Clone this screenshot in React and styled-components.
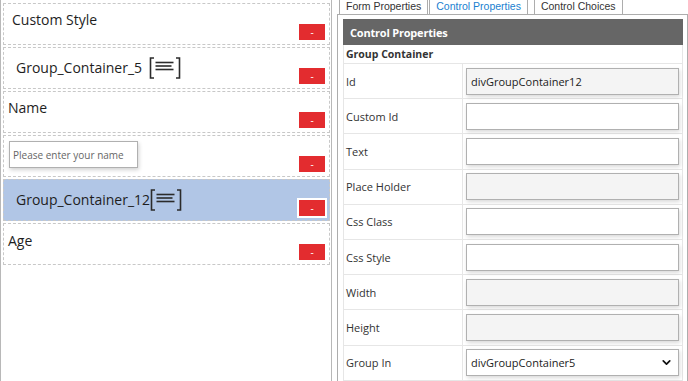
import styled, { createGlobalStyle } from 'styled-components'
import { ChevronDown } from 'lucide-react'

const GlobalStyle = createGlobalStyle`
    html, body {
        margin: 0;
        padding: 0;
        background: #fff;
    }
    body {
        font-family: "Segoe UI", "Open Sans", "Noto Sans", sans-serif;
        color: #222;
    }
`

const controls = [
    { id: 1, kind: 'label', text: 'Custom Style', indent: 8, top: 6 },
    { id: 2, kind: 'group', text: 'Group_Container_5', indent: 12, top: 8 },
    { id: 3, kind: 'label', text: 'Name', indent: 4, top: 6 },
    { id: 4, kind: 'input', text: 'Please enter your name' },
    { id: 5, kind: 'group', text: 'Group_Container_12', indent: 12, top: 8, selected: true },
    { id: 6, kind: 'label', text: 'Age', indent: 4, top: 7 },
]

const properties = [
    { label: 'Id', value: 'divGroupContainer12', disabled: true },
    { label: 'Custom Id' },
    { label: 'Text' },
    { label: 'Place Holder', disabled: true },
    { label: 'Css Class' },
    { label: 'Css Style' },
    { label: 'Width', disabled: true },
    { label: 'Height', disabled: true },
    { label: 'Group In', select: true, value: 'divGroupContainer5' },
]

function GroupIcon() {
    return (
        <IconWrap>
            <svg width="32" height="22" viewBox="0 0 32 22" fill="none" stroke="#2b2b2b" strokeWidth="1.6">
                <path d="M5 1 H1.5 V21 H5" />
                <path d="M27 1 H30.5 V21 H27" />
                <path d="M6.5 5.5 H24.5" />
                <path d="M6.5 9 H22.5" />
                <path d="M6.5 12.5 H24.5" />
            </svg>
        </IconWrap>
    )
}

function ControlItem({ control }) {
    return (
        <Item $selected={control.selected}>
            {control.kind === 'input' ? (
                <PreviewInput placeholder={control.text} />
            ) : (
                <Caption $indent={control.indent} $top={control.top}>
                    {control.kind === 'group' ? <GroupName>{control.text}</GroupName> : control.text}
                    {control.kind === 'group' && <GroupIcon />}
                </Caption>
            )}
            <RemoveButton $focused={control.selected}>-</RemoveButton>
        </Item>
    )
}

export default function App() {
    return (
        <>
            <GlobalStyle />
            <Page>
                <Designer>
                    <ControlList>
                        {controls.map(c => <ControlItem key={c.id} control={c} />)}
                    </ControlList>
                </Designer>
                <Inspector>
                    <Tabs>
                        <Tab>Form Properties</Tab>
                        <Tab $active>Control Properties</Tab>
                        <Tab $gap>Control Choices</Tab>
                    </Tabs>
                    <TabBody>
                        <PanelHeader>Control Properties</PanelHeader>
                        <Table>
                            <SectionRow>Group Container</SectionRow>
                            {properties.map(p => (
                                <Row key={p.label}>
                                    <Label>{p.label}</Label>
                                    <Cell>
                                        {p.select ? (
                                            <SelectBox>
                                                <span>{p.value}</span>
                                                <ChevronDown size={13} strokeWidth={3.2} color="#111" />
                                            </SelectBox>
                                        ) : (
                                            <Field $disabled={p.disabled}>{p.value}</Field>
                                        )}
                                    </Cell>
                                </Row>
                            ))}
                        </Table>
                    </TabBody>
                </Inspector>
            </Page>
        </>
    )
}

const Page = styled.div`
    display: flex;
    gap: 5px;
    height: 381px;
    overflow: hidden;
`

const Designer = styled.div`
    width: 332px;
    height: 100%;
    box-sizing: border-box;
    border-left: 1px solid #b8b8b8;
    border-right: 1px solid #b8b8b8;
`

const ControlList = styled.div`
    display: flex;
    flex-direction: column;
    gap: 2px;
    padding: 3px 1px 0 2px;
`

const Item = styled.div`
    height: 42px;
    box-sizing: border-box;
    border: 1px dashed #c8c8c8;
    background: ${p => (p.$selected ? '#b1c6e6' : '#fff')};
    display: flex;
    justify-content: space-between;
    align-items: flex-start;
    padding: 0 4px 4px 0;
`

const Caption = styled.div`
    display: flex;
    align-items: center;
    padding-left: ${p => p.$indent}px;
    padding-top: ${p => p.$top}px;
    font-size: 14px;
    line-height: 20px;
    color: #1e1e1e;
`

const GroupName = styled.span`
    min-width: 133px;
`

const IconWrap = styled.span`
    display: inline-flex;
    margin-top: 1px;
`

const PreviewInput = styled.input`
    margin: 5px 0 0 5px;
    width: 129px;
    height: 27px;
    box-sizing: border-box;
    border: 1px solid #b0b0b0;
    box-shadow: 1px 2px 4px rgba(0, 0, 0, 0.18);
    padding: 0 3px;
    font-family: inherit;
    font-size: 10px;
    outline: none;
    &::placeholder {
        color: #666;
    }
`

const RemoveButton = styled.button`
    align-self: flex-end;
    width: 26px;
    height: 16px;
    padding: 0;
    border: none;
    background: #e32c2f;
    color: #fff;
    font-size: 10px;
    line-height: 16px;
    font-family: inherit;
    box-shadow: ${p => (p.$focused ? '0 0 0 2px #fff' : 'none')};
`

const Inspector = styled.div`
    width: 351px;
    display: flex;
    flex-direction: column;
`

const Tabs = styled.div`
    display: flex;
    height: 14px;
    padding-left: 2px;
    gap: 1px;
`

const Tab = styled.div`
    box-sizing: border-box;
    height: 14px;
    padding: 0 6px;
    margin-left: ${p => (p.$gap ? '5px' : '0')};
    border: 1px solid #adadad;
    border-top: none;
    border-bottom: none;
    font-family: "Liberation Sans", Arial, sans-serif;
    font-size: 10.5px;
    line-height: 12px;
    color: ${p => (p.$active ? '#1a7fd0' : '#333')};
    background: #fff;
`

const TabBody = styled.div`
    flex: 1;
    box-sizing: border-box;
    border: 1px solid #adadad;
    border-bottom: none;
    padding: 4px 4px 0 5px;
`

const PanelHeader = styled.div`
    height: 26px;
    background: #666;
    color: #fff;
    font-weight: bold;
    font-size: 11px;
    letter-spacing: -0.2px;
    line-height: 27px;
    padding-left: 7px;
`

const Table = styled.div`
    border-left: 1px solid #e6e6e6;
    border-right: 1px solid #e6e6e6;
`

const SectionRow = styled.div`
    height: 18px;
    border-bottom: 1px solid #e6e6e6;
    font-weight: bold;
    font-size: 10.5px;
    line-height: 19px;
    padding-left: 2px;
    color: #333;
`

const Row = styled.div`
    display: grid;
    grid-template-columns: 119px 1fr;
    height: 35.2px;
    box-sizing: border-box;
    border-bottom: 1px solid #e6e6e6;
`

const Label = styled.div`
    display: flex;
    align-items: center;
    padding-left: 2px;
    border-right: 1px solid #e6e6e6;
    font-size: 11px;
    color: #333;
`

const Cell = styled.div`
    display: flex;
    align-items: center;
    padding: 0 3px;
`

const Field = styled.div`
    flex: 1;
    height: 27px;
    box-sizing: border-box;
    border: 1px solid #b0b0b0;
    background: ${p => (p.$disabled ? '#f4f4f4' : '#fff')};
    box-shadow: 1px 2px 4px rgba(0, 0, 0, 0.15);
    padding: 0 4px;
    font-size: 11px;
    line-height: 25px;
    color: #222;
`

const SelectBox = styled(Field)`
    display: flex;
    align-items: center;
    justify-content: space-between;
    padding-right: 5px;
`
